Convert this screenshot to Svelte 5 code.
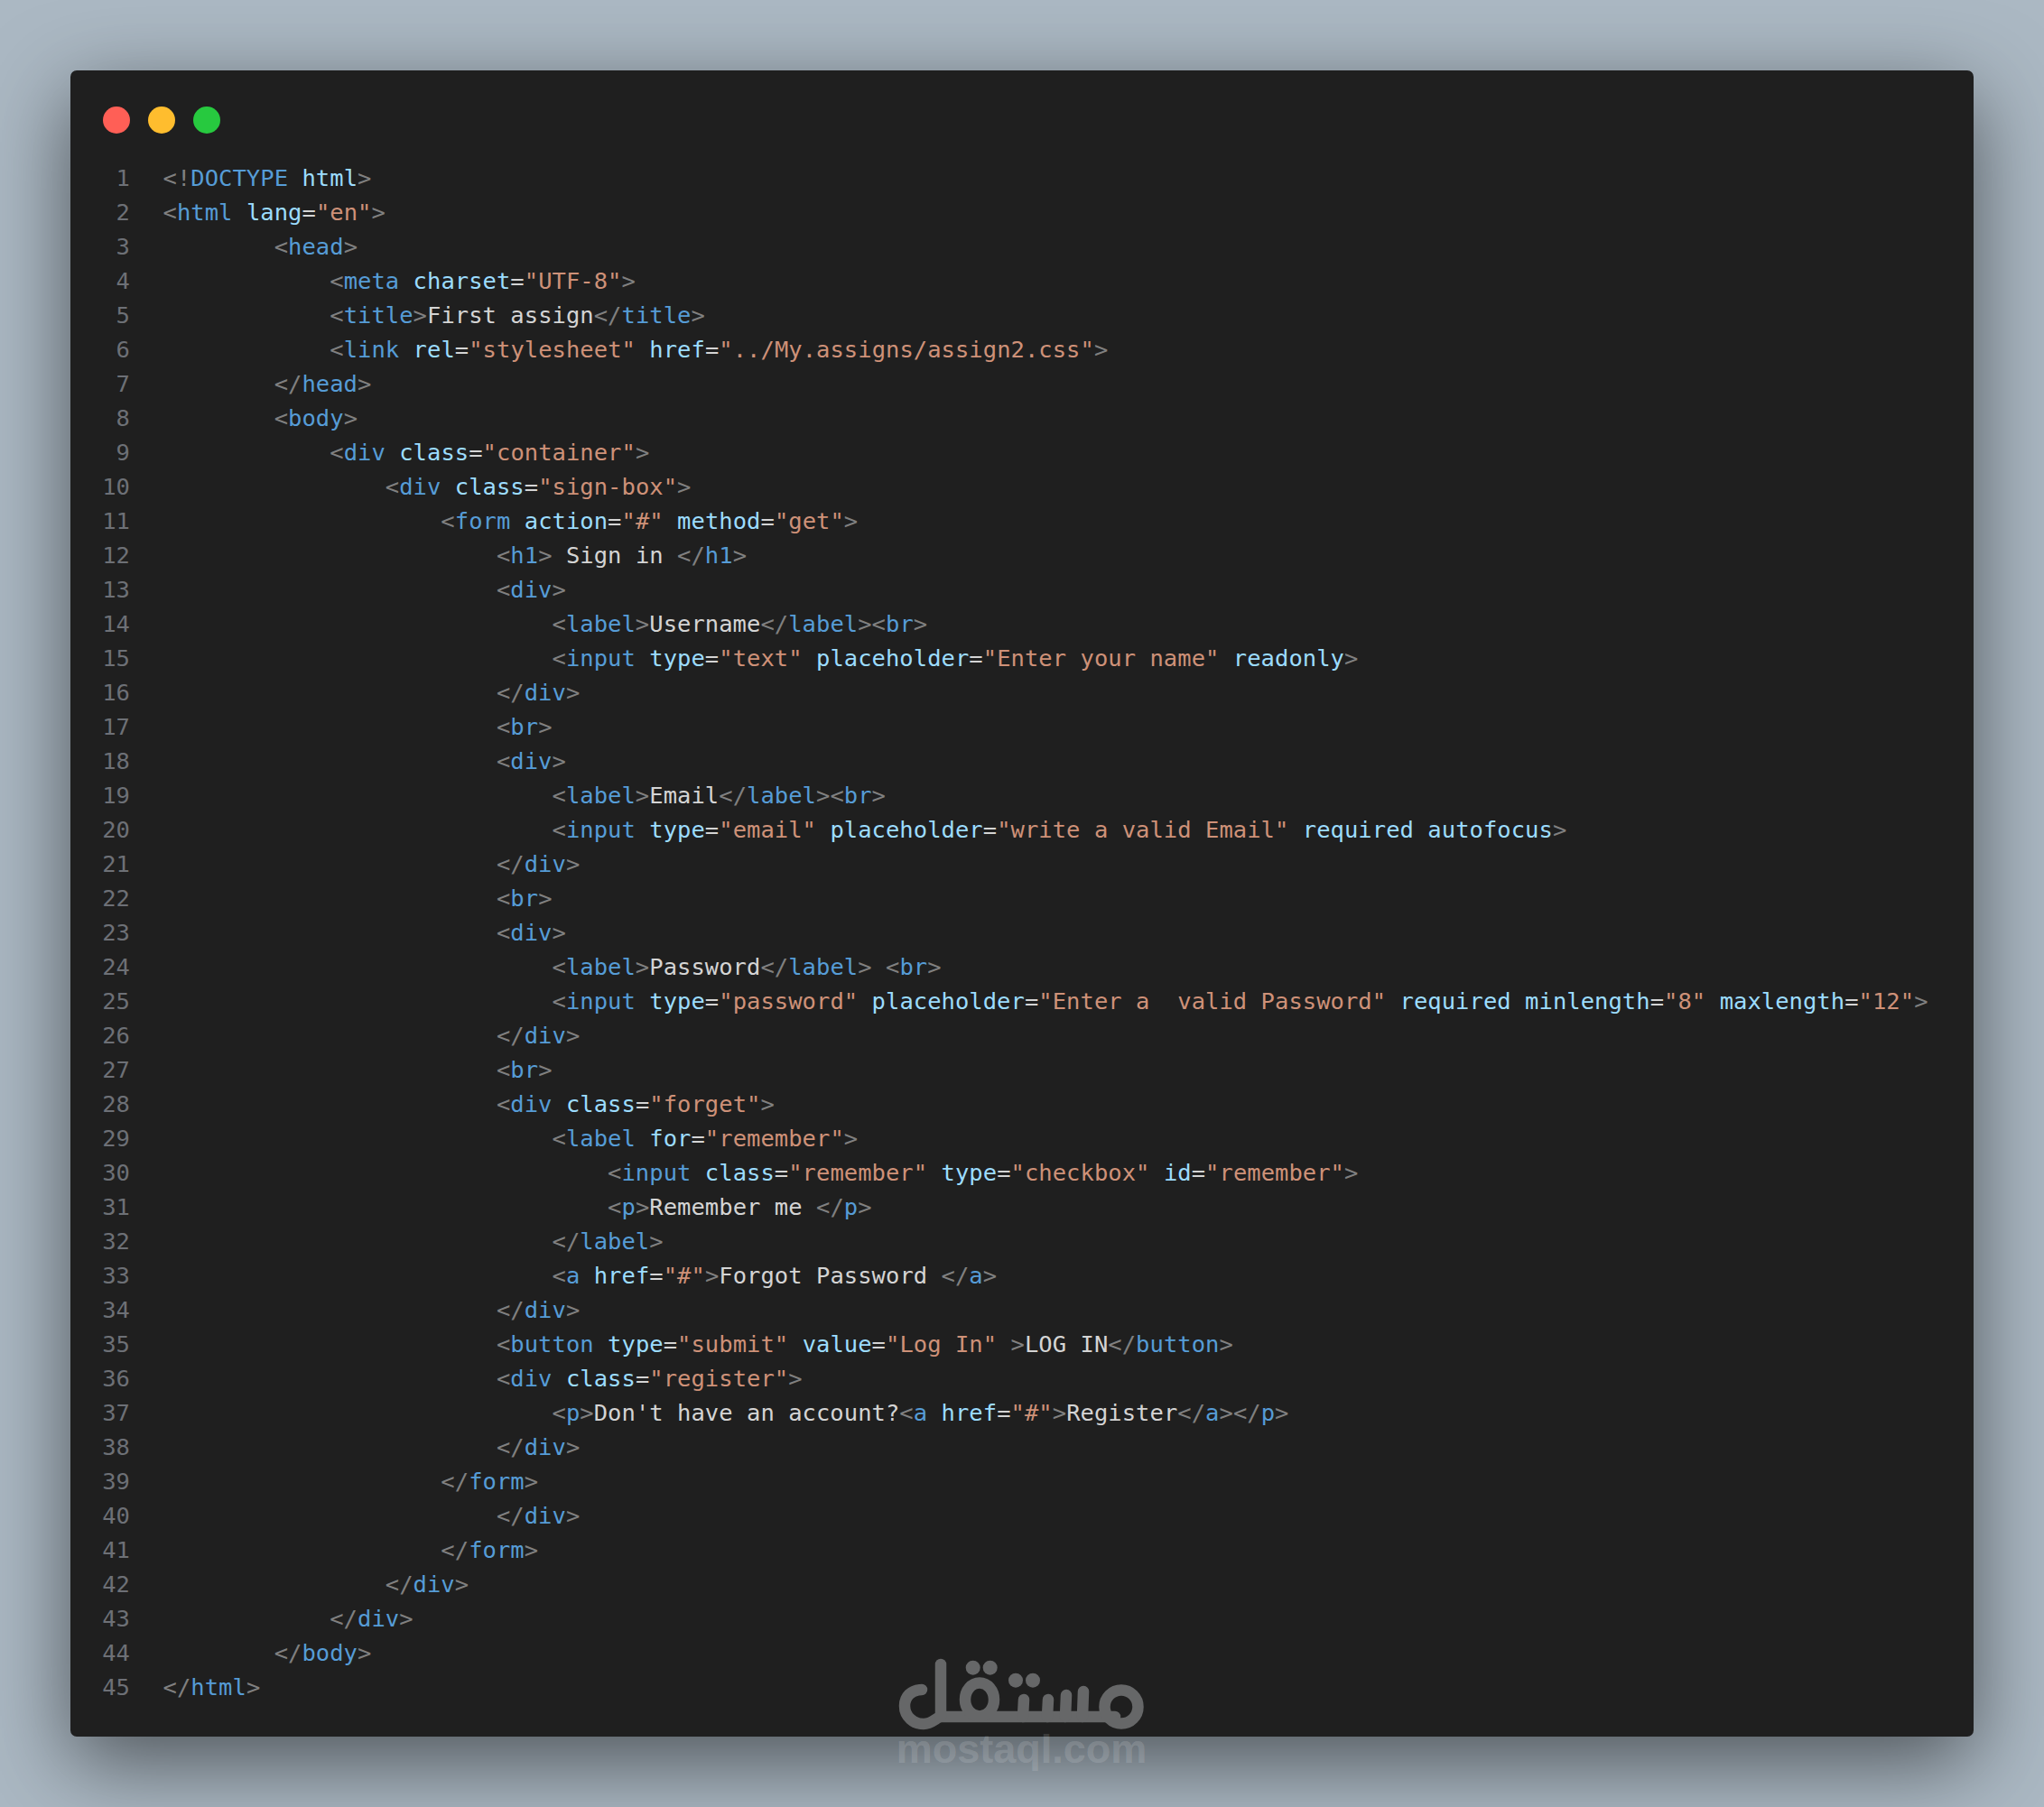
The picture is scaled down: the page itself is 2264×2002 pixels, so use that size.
<script>
	// token kinds: p = punctuation, t = tag, a = attribute, e = equals, s = string, x = plain text
	function tag(name, attrs = [], close = false, tail = '') {
		const out = [['p', close ? '</' : '<'], ['t', name]];
		for (const [k, v] of attrs) {
			out.push(['x', ' '], ['a', k]);
			if (v !== undefined) out.push(['e', '='], ['s', `"${v}"`]);
		}
		out.push(['x', tail], ['p', '>']);
		return out;
	}
	const end = (name) => tag(name, [], true);
	const txt = (s) => [['x', s]];
	const line = (indent, ...parts) => ({ indent, tokens: parts.flat() });

	const lines = [
		line(0, [['p', '<!'], ['t', 'DOCTYPE'], ['x', ' '], ['a', 'html'], ['p', '>']]),
		line(0, tag('html', [['lang', 'en']])),
		line(8, tag('head')),
		line(12, tag('meta', [['charset', 'UTF-8']])),
		line(12, tag('title'), txt('First assign'), end('title')),
		line(12, tag('link', [['rel', 'stylesheet'], ['href', '../My.assigns/assign2.css']])),
		line(8, end('head')),
		line(8, tag('body')),
		line(12, tag('div', [['class', 'container']])),
		line(16, tag('div', [['class', 'sign-box']])),
		line(20, tag('form', [['action', '#'], ['method', 'get']])),
		line(24, tag('h1'), txt(' Sign in '), end('h1')),
		line(24, tag('div')),
		line(28, tag('label'), txt('Username'), end('label'), tag('br')),
		line(28, tag('input', [['type', 'text'], ['placeholder', 'Enter your name'], ['readonly']])),
		line(24, end('div')),
		line(24, tag('br')),
		line(24, tag('div')),
		line(28, tag('label'), txt('Email'), end('label'), tag('br')),
		line(28, tag('input', [['type', 'email'], ['placeholder', 'write a valid Email'], ['required'], ['autofocus']])),
		line(24, end('div')),
		line(24, tag('br')),
		line(24, tag('div')),
		line(28, tag('label'), txt('Password'), end('label'), txt(' '), tag('br')),
		line(28, tag('input', [['type', 'password'], ['placeholder', 'Enter a  valid Password'], ['required'], ['minlength', '8'], ['maxlength', '12']])),
		line(24, end('div')),
		line(24, tag('br')),
		line(24, tag('div', [['class', 'forget']])),
		line(28, tag('label', [['for', 'remember']])),
		line(32, tag('input', [['class', 'remember'], ['type', 'checkbox'], ['id', 'remember']])),
		line(32, tag('p'), txt('Remember me '), end('p')),
		line(28, end('label')),
		line(28, tag('a', [['href', '#']]), txt('Forgot Password '), end('a')),
		line(24, end('div')),
		line(24, tag('button', [['type', 'submit'], ['value', 'Log In']], false, ' '), txt('LOG IN'), end('button')),
		line(24, tag('div', [['class', 'register']])),
		line(28, tag('p'), txt("Don't have an account?"), tag('a', [['href', '#']]), txt('Register'), end('a'), end('p')),
		line(24, end('div')),
		line(20, end('form')),
		line(24, end('div')),
		line(20, end('form')),
		line(16, end('div')),
		line(12, end('div')),
		line(8, end('body')),
		line(0, end('html'))
	];
</script>

<div class="page">
	<div class="window">
		<div class="dots">
			<span class="dot red"></span>
			<span class="dot yellow"></span>
			<span class="dot green"></span>
		</div>
		<div class="code">
			{#each lines as l, i}
				<div class="row">
					<span class="num">{i + 1}</span>
					<span class="src">{' '.repeat(l.indent)}{#each l.tokens as [kind, text]}<span class={kind}>{text}</span>{/each}</span>
				</div>
			{/each}
		</div>
	</div>

	<div class="mark">
		<svg class="logo" viewBox="0 0 295 100" width="295" height="100" aria-hidden="true">
			<g fill="none" stroke="#666768" stroke-width="12.5" stroke-linecap="round" stroke-linejoin="round">
				<path d="M36 47 C24 47 17 55 17 65 C17 77 27 85 38 85 C46 85 50 80 56 77 L250 77" />
				<path d="M57 77 L57 19" />
				<ellipse cx="100" cy="58" rx="16" ry="18.5" />
				<path d="M148 77 L149 58" />
				<path d="M175 77 L176 58" />
				<path d="M195 77 L196 53" />
				<path d="M214 77 L215 49" />
				<circle cx="257" cy="66" r="18.5" />
			</g>
			<g fill="#666768">
				<circle cx="92.7" cy="22.7" r="8" />
				<circle cx="111.7" cy="22.7" r="8" />
				<circle cx="140" cy="36.7" r="8" />
				<circle cx="159" cy="36.7" r="8" />
			</g>
		</svg>
		<div class="site">mostaql.com</div>
	</div>
</div>

<style>
:global(body) {
	margin: 0;
}

.page {
	position: relative;
	box-sizing: border-box;
	width: 2264px;
	height: 2002px;
	padding: 78px;
	background: #abb8c3;
	overflow: hidden;
}

.window {
	box-sizing: border-box;
	height: 1846px;
	padding: 40px 0 0 0;
	background: #1f1f1f;
	border-radius: 7px;
	box-shadow: 0 28px 95px rgba(0, 0, 0, 0.55);
}

.dots {
	display: flex;
	gap: 20px;
	padding-left: 36px;
}

.dot {
	width: 30px;
	height: 30px;
	border-radius: 50%;
}
.red { background: #ff5f56; }
.yellow { background: #ffbd2e; }
.green { background: #27c93f; }

.code {
	margin-top: 30px;
	font-family: "DejaVu Sans Mono", monospace;
	font-size: 25.5px;
	line-height: 38px;
	letter-spacing: 0.04px;
}

.row {
	display: flex;
	height: 38px;
}

.num {
	width: 66px;
	text-align: right;
	color: #6d7076;
	flex: none;
}

.src {
	margin-left: 36.5px;
	white-space: pre;
	color: #d4d4d4;
}

.p { color: #808080; }
.t { color: #569cd6; }
.a { color: #9cdcfe; }
.e { color: #d4d4d4; }
.s { color: #ce9178; }
.x { color: #d4d4d4; }

.mark {
	position: absolute;
	left: 985px;
	top: 1825px;
	width: 295px;
}

.logo {
	display: block;
}

.site {
	margin-top: -12px;
	margin-left: -2px;
	font-family: "Liberation Sans", Arial, sans-serif;
	font-weight: 700;
	font-size: 45px;
	line-height: 50px;
	text-align: center;
	color: rgba(255, 255, 255, 0.15);
}
</style>
